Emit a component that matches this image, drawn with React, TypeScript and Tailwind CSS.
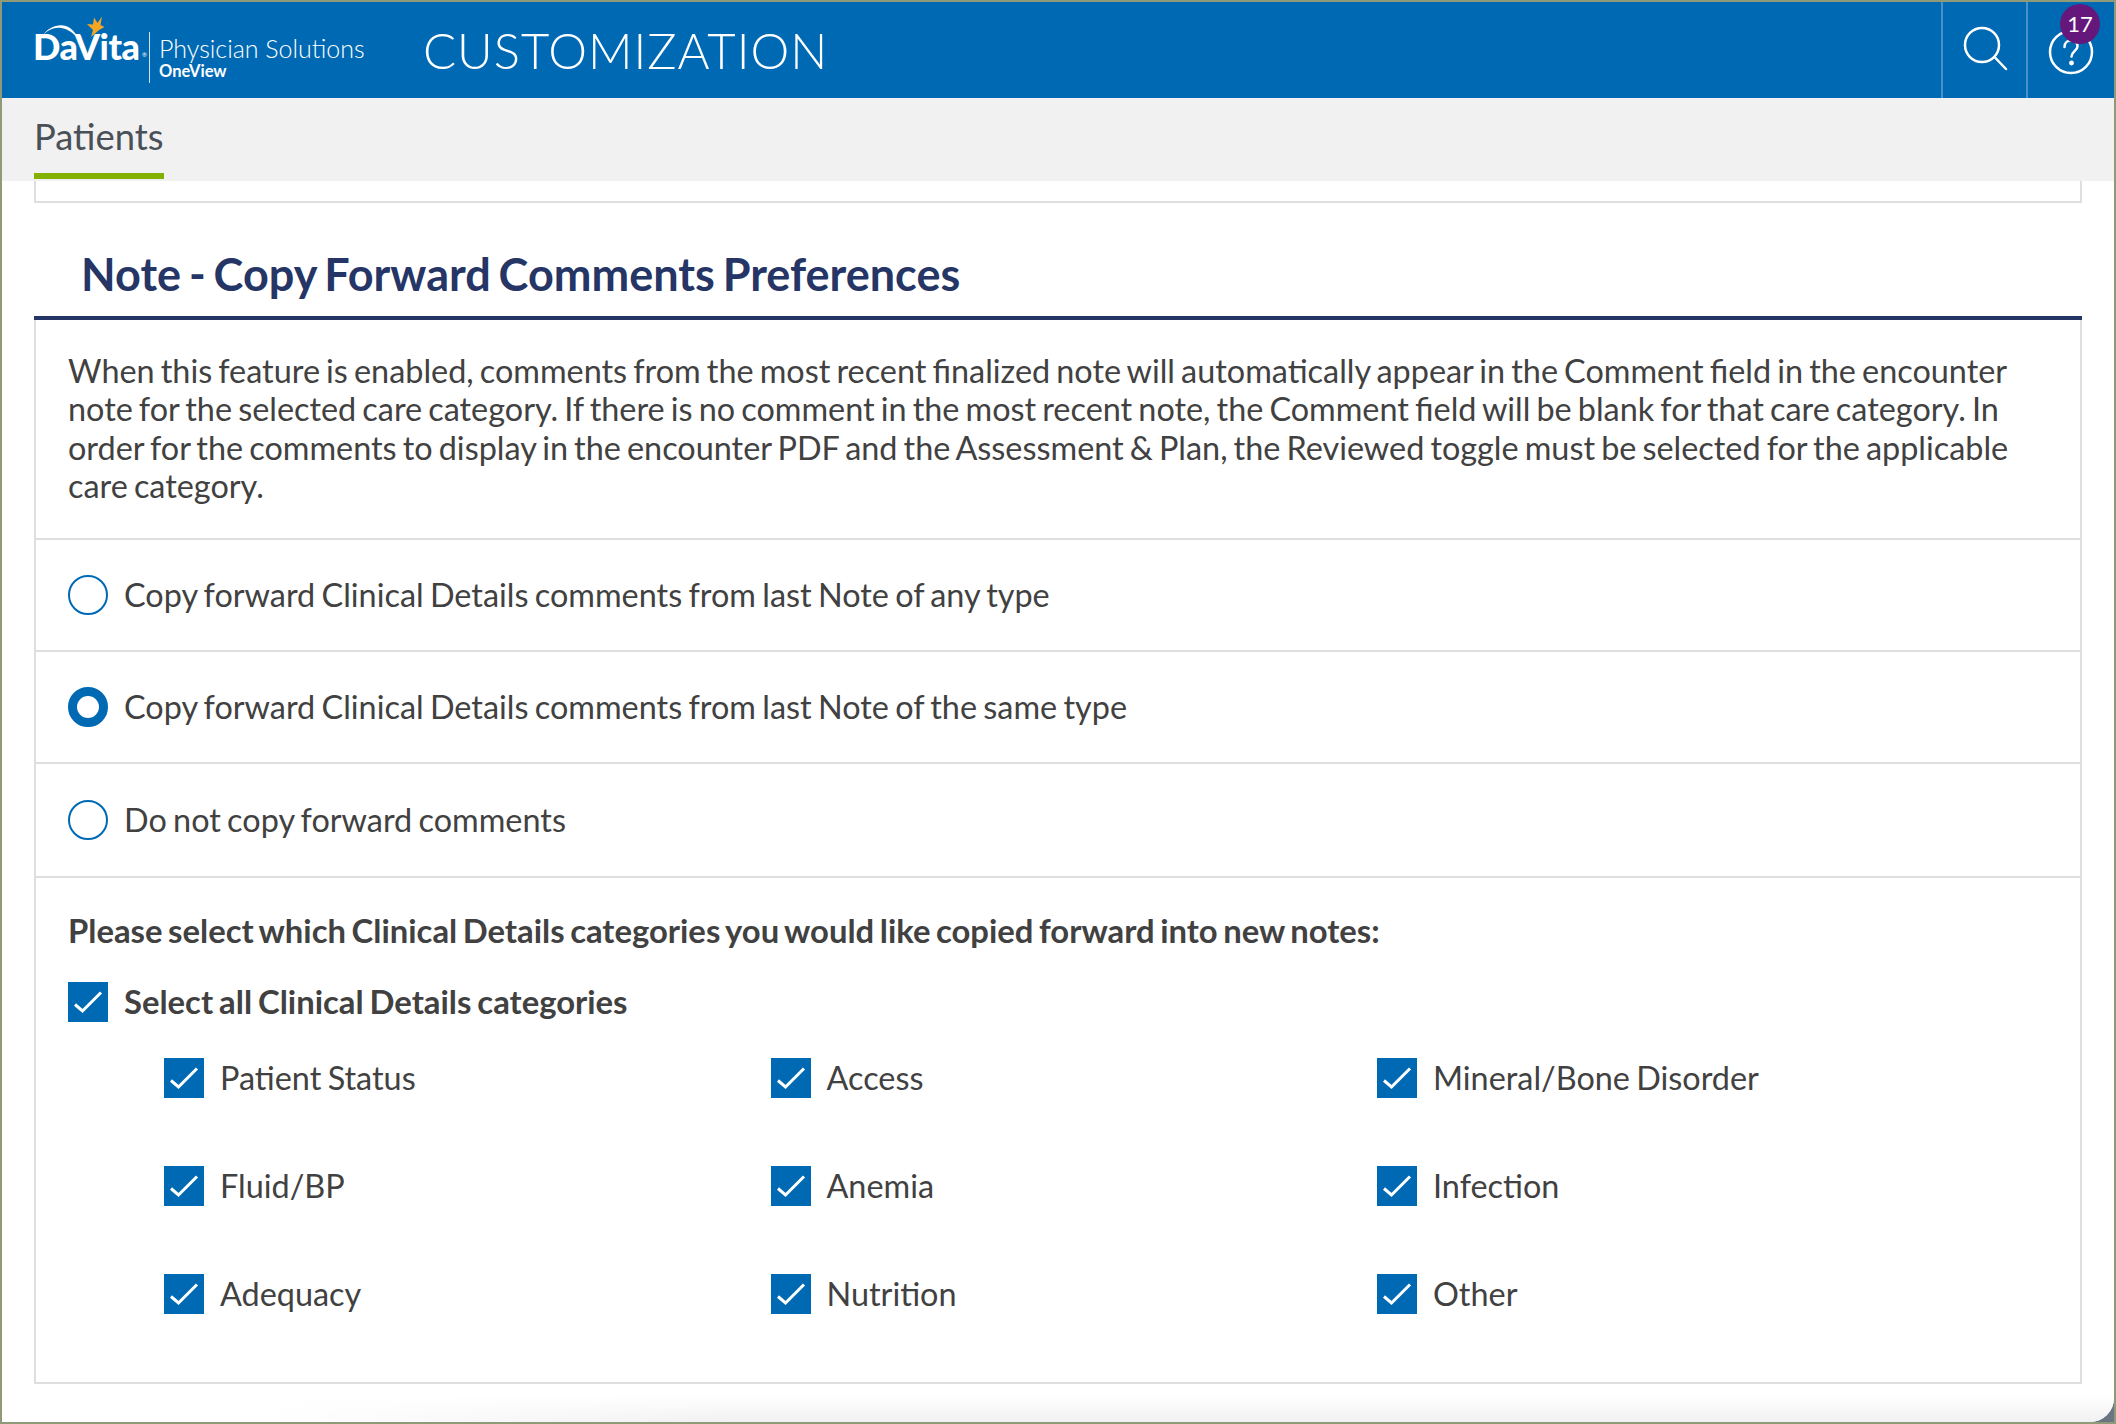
const lato = "font-[Lato,sans-serif]";

const categories = [
  "Patient Status",
  "Access",
  "Mineral/Bone Disorder",
  "Fluid/BP",
  "Anemia",
  "Infection",
  "Adequacy",
  "Nutrition",
  "Other",
];

function Logo() {
  return (
    <div className="relative flex h-full w-[336px] shrink-0 items-start">
      <svg className="absolute left-0 top-0 h-[45px] w-[120px]" viewBox="0 0 120 45">
        <path d="M41 33C47 24 60 20 68 26C72 29 75 33 77 38C72 31 66 27 59 26C52 25 46 28 41 33Z" fill="#fff" />
        <path
          d="M92 15.500L95.500 21L100 14.500L98.500 23L102.500 25L97 28L89 35L91 28L85 22L91 22.500Z"
          fill="#f5a623"
        />
      </svg>
      <span className="absolute left-[31px] top-[23px] text-[36px] font-black leading-[42px] tracking-[-0.5px] text-white">
        DaVita
      </span>
      <span className="absolute left-[140px] top-[49px] text-[6px] leading-[8px] text-white">®</span>
      <div className="absolute left-[147px] top-[30px] h-[51px] w-px bg-[#cfe0ef]" />
      <span className="absolute left-[157px] top-[28px] whitespace-nowrap text-[25px] font-light leading-[36px] text-white">
        Physician Solutions
      </span>
      <span className="absolute left-[157px] top-[58px] text-[16.500px] font-bold leading-[22px] text-white">
        OneView
      </span>
    </div>
  );
}

function Header() {
  return (
    <header className="flex h-[96px] shrink-0 items-stretch bg-[#0069b4]">
      <Logo />
      <h1 className="ml-[85px] self-center whitespace-nowrap text-[49px] font-light leading-[56px] tracking-[1px] text-white">
        CUSTOMIZATION
      </h1>
      <button className="ml-auto flex w-[85px] items-center justify-center border-l-2 border-[#4b8fc9]">
        <svg className="ml-[2px] mt-[-2px] h-[48px] w-[48px]" viewBox="0 0 48 48" fill="none" stroke="#fff" strokeWidth="2.500">
          <circle cx="20" cy="20" r="17" />
          <path d="M32.500 32L44 44" strokeLinecap="round" />
        </svg>
      </button>
      <button className="relative flex w-[88px] items-center justify-center border-l-2 border-[#4b8fc9]">
        <svg className="mt-[4px] h-[46px] w-[46px]" viewBox="0 0 46 46" fill="none" stroke="#fff" strokeWidth="2.500">
          <circle cx="23" cy="23" r="21" />
          <path d="M16.500 18C16.500 14 19.500 11.500 23 11.500C26.800 11.500 29.500 14 29.500 17.500C29.500 21.500 23.500 22.500 23.500 27.500" strokeLinecap="round" />
          <circle cx="23.500" cy="34" r="1.200" fill="#fff" />
        </svg>
        <span className="absolute left-[32px] top-[2px] flex h-[40px] w-[40px] items-center justify-center rounded-full bg-[#65187c] text-[22px] leading-none text-white">
          17
        </span>
      </button>
    </header>
  );
}

function Radio({ checked, label }: { checked?: boolean; label: string }) {
  return (
    <div className="flex items-center gap-4 px-8">
      <span
        className={
          checked
            ? "h-[40px] w-[40px] shrink-0 rounded-full border-[9px] border-[#0069b4] bg-white"
            : "h-[40px] w-[40px] shrink-0 rounded-full border-2 border-[#0069b4] bg-white"
        }
      />
      <span>{label}</span>
    </div>
  );
}

function Checkbox({ label, bold }: { label: string; bold?: boolean }) {
  return (
    <div className={bold ? "flex h-[40px] items-center gap-4 text-[32.800px] font-bold" : "flex h-[40px] items-center gap-4"}>
      <span className="h-[40px] w-[40px] shrink-0 bg-[#0069b4]">
        <svg viewBox="0 0 40 40" className="h-full w-full" fill="none" stroke="#fff" strokeWidth="3">
          <path d="M7 22.500L14.500 29L33 10.500" />
        </svg>
      </span>
      <span>{label}</span>
    </div>
  );
}

export default function App() {
  return (
    <div className={`${lato} flex h-[1424px] w-[2116px] flex-col border-2 border-[#8f9a78] bg-[#6b7482] text-[32.400px] leading-[38px] text-[#414141]`}>
      <div className="flex flex-1 flex-col overflow-hidden rounded-br-[24px] bg-white">
        <Header />
        <nav className="h-[83px] shrink-0 bg-[#f1f1f1] pl-[32px]">
          <div className="flex h-[81px] w-[130px] items-center border-b-[6px] border-[#84b000] text-[36.400px] text-[#4a5058]">
            Patients
          </div>
        </nav>
        <main className="ml-[32px] mr-[32px] [word-spacing:-2px]">
          <div className="h-[22px] border-x-2 border-b-2 border-[#dedede]" />
          <h2 className="flex h-[117px] items-center border-b-4 border-[#253565] pl-[47px] pt-[28px] text-[45px] font-bold [word-spacing:-3px] text-[#253565]">
            Note - Copy Forward Comments Preferences
          </h2>
          <section className="border-x-2 border-b-2 border-[#dedede]">
            <p className="h-[220px] border-b-2 border-[#dedede] px-8 pt-8 leading-[38.300px] [word-spacing:-2.200px]">
              When this feature is enabled, comments from the most recent finalized note will automatically appear in the Comment field in the encounter note for the selected care category. If there is no comment in the most recent note, the Comment field will be blank for that care category. In order for the comments to display in the encounter PDF and the Assessment &amp; Plan, the Reviewed toggle must be selected for the applicable care category.
            </p>
            <div className="grid h-[112px] items-center border-b-2 border-[#dedede]">
              <Radio label="Copy forward Clinical Details comments from last Note of any type" />
            </div>
            <div className="grid h-[112px] items-center border-b-2 border-[#dedede]">
              <Radio checked label="Copy forward Clinical Details comments from last Note of the same type" />
            </div>
            <div className="grid h-[114px] items-center border-b-2 border-[#dedede]">
              <Radio label="Do not copy forward comments" />
            </div>
            <div className="h-[504px] px-8 pt-[34px]">
              <p className="text-[32.800px] font-bold [word-spacing:-2.400px]">Please select which Clinical Details categories you would like copied forward into new notes:</p>
              <div className="mt-[32px]">
                <Checkbox bold label="Select all Clinical Details categories" />
              </div>
              <div className="mt-[36px] grid grid-cols-[606.500px_606.500px_1fr] gap-y-[68px] pl-[96px]">
                {categories.map((c) => (
                  <Checkbox key={c} label={c} />
                ))}
              </div>
            </div>
          </section>
        </main>
        <div className="flex-1 bg-[linear-gradient(to_right,#fff_12%,transparent_35%),linear-gradient(to_bottom,#fff_30%,#f1f1f1)]" />
      </div>
    </div>
  );
}
